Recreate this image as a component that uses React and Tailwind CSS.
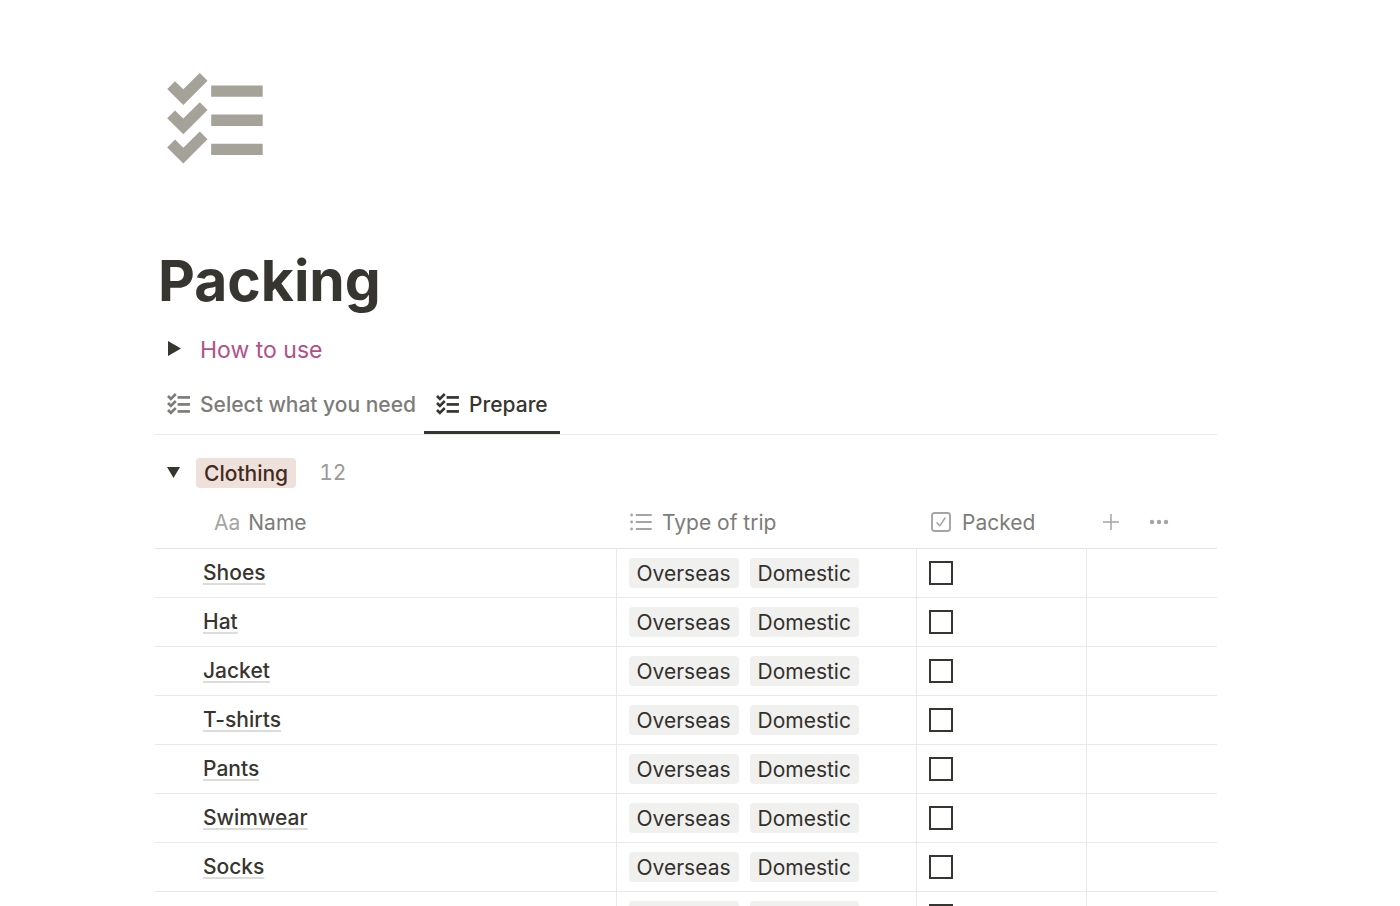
import React from "react";

const items = [
  "Shoes",
  "Hat",
  "Jacket",
  "T-shirts",
  "Pants",
  "Swimwear",
  "Socks",
  "Underwear",
];

const trips = ["Overseas", "Domestic"];

const ChecklistIcon = ({ className }) => (
  <svg
    viewBox="0 0 96 91"
    fill="currentColor"
    className={className}
    aria-hidden="true"
  >
    {[0, 29.2, 58.4].map((y) => (
      <g key={y} transform={`translate(0 ${y})`}>
        <path d="M0.2 16 8 8.2 16.3 16.3 32.8 0 40.5 7.8 16.3 32Z" />
        <path d="M44.2 12.4H95.7V23.7H44.2Z" />
      </g>
    ))}
  </svg>
);

const ListIcon = () => (
  <svg
    viewBox="0 0 22 18"
    className="h-[18px] w-[22px] text-[#a5a5a2]"
    fill="none"
    stroke="currentColor"
    strokeLinecap="round"
    aria-hidden="true"
  >
    <path d="M6.5 2H21M6.5 9H21M6.5 16H21" strokeWidth="1.9" />
    <path d="M1.6 2h.01M1.6 9h.01M1.6 16h.01" strokeWidth="2.8" />
  </svg>
);

const CheckboxIcon = () => (
  <svg
    viewBox="0 0 20 20"
    className="size-5 text-[#a5a5a2]"
    fill="none"
    stroke="currentColor"
    aria-hidden="true"
  >
    <rect x="1" y="1" width="18" height="18" rx="2.4" strokeWidth="1.9" />
    <path
      d="M6 10.8 8.8 13.8 14 6"
      strokeWidth="1.5"
      strokeLinecap="round"
      strokeLinejoin="round"
    />
  </svg>
);

const App = () => {
  return (
    <main className="bg-white pt-[73px] pr-[183px] pl-[155px] font-[Inter,sans-serif] text-[#37352f]">
      <ChecklistIcon className="ml-3 h-[91px] w-24 text-[#a5a299]" />

      <h1 className="mt-[81px] ml-[3px] text-[57px] leading-[72px] font-bold">
        Packing
      </h1>

      <button className="mt-[17px] flex h-8 items-center text-[23px] text-[#b3508a]">
        <span className="flex w-[45px] pb-[3px] pl-[13px] text-[#37352f]">
          <svg viewBox="0 0 13 15" className="h-[15px] w-[13px]" fill="currentColor">
            <path d="M0 0 13 7.5 0 15Z" />
          </svg>
        </span>
        How to use
      </button>

      <nav className="mt-2 flex border-b border-[#e9e9e7] text-[21px] font-medium">
        <button className="flex h-[60px] items-center gap-[10px] pt-[2px] pr-2 pl-3 text-[#7d7c78]">
          <ChecklistIcon className="mb-[2px] h-[22px] w-[23px]" />
          Select what you need
        </button>
        <button className="flex h-[60px] items-center gap-[10px] border-b-[3px] border-[#37352f] px-3 pt-[5px]">
          <ChecklistIcon className="mb-[2px] h-[22px] w-[23px]" />
          Prepare
        </button>
      </nav>

      <section>
        <div className="mt-[23px] flex h-[30px] items-center text-[21px]">
          <button aria-label="Collapse Clothing" className="w-[41px] pb-px pl-3">
            <svg viewBox="0 0 13 11" className="h-[11px] w-[13px]" fill="currentColor">
              <path d="M0 0H13L6.5 11Z" />
            </svg>
          </button>
          <h2 className="rounded bg-[#eee0da] px-2 pt-[2px] leading-[28px] font-medium text-[#442a1e]">
            Clothing
          </h2>
          <span className="ml-[23px] text-[#9b9a97] tabular-nums">12</span>
        </div>

        <table className="mt-[9px] w-full table-fixed border-collapse text-left text-[21px]">
          <thead>
            <tr className="h-[51px] border-b border-[#e3e3e1] text-[#7d7c78]">
              <th className="w-[461px] pl-[59px] font-normal">
                <span className="mr-2 text-[#a5a5a2]">Aa</span>
                Name
              </th>
              <th className="w-[300px] pl-[14px] font-normal">
                <span className="flex items-center gap-[10px]">
                  <ListIcon />
                  Type of trip
                </span>
              </th>
              <th className="w-[170px] pl-[15px] font-normal">
                <span className="flex items-center gap-[11px]">
                  <CheckboxIcon />
                  Packed
                </span>
              </th>
              <th className="pl-[17px] text-[#a5a5a2]">
                <span className="flex items-center gap-[30px]">
                  <button aria-label="Add column">
                    <svg viewBox="0 0 16 16" className="size-4" stroke="currentColor">
                      <path d="M8 0V16M0 8H16" strokeWidth="1.5" />
                    </svg>
                  </button>
                  <button aria-label="More options">
                    <svg viewBox="0 0 20 6" className="h-[6px] w-5" fill="currentColor">
                      <circle cx="3" cy="3" r="2.2" />
                      <circle cx="10" cy="3" r="2.2" />
                      <circle cx="17" cy="3" r="2.2" />
                    </svg>
                  </button>
                </span>
              </th>
            </tr>
          </thead>
          <tbody>
            {items.map((item) => (
              <tr key={item} className="h-[49px] border-b border-[#e9e9e7]">
                <td className="border-r border-[#e9e9e7] pl-12 font-medium">
                  <a
                    href="#"
                    className="underline decoration-[#dcdcda] decoration-2 underline-offset-3"
                  >
                    {item}
                  </a>
                </td>
                <td className="border-r border-[#e9e9e7] pl-3">
                  <div className="flex gap-[11px]">
                    {trips.map((trip) => (
                      <span
                        key={trip}
                        className="rounded bg-[#f0f0ef] px-2 pt-[2px] leading-[28px] text-[#32302c]"
                      >
                        {trip}
                      </span>
                    ))}
                  </div>
                </td>
                <td className="border-r border-[#e9e9e7] pl-3">
                  <input
                    type="checkbox"
                    aria-label={`${item} packed`}
                    className="block size-6 appearance-none border-2 border-[#37352f] checked:bg-[#37352f]"
                  />
                </td>
                <td></td>
              </tr>
            ))}
          </tbody>
        </table>
      </section>
    </main>
  );
};

export default App;
